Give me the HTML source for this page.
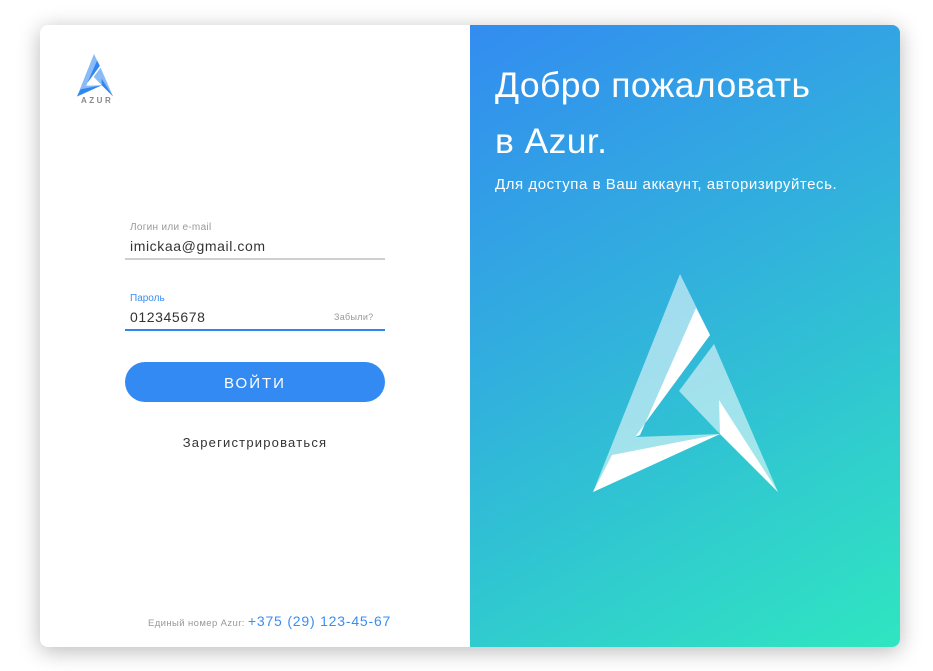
<!DOCTYPE html>
<html><head><meta charset="utf-8"><style>
*{margin:0;padding:0;box-sizing:border-box}
body{width:933px;height:671px;background:#fff;font-family:"Liberation Sans",sans-serif;position:relative;overflow:hidden}
.card{position:absolute;left:40px;top:25px;width:860px;height:622px;border-radius:8px;overflow:hidden;box-shadow:0 4px 22px rgba(0,0,0,0.28);background:#fff}
.right{position:absolute;left:430px;top:0;width:430px;height:622px;background:linear-gradient(150deg,#338cf0 0%,#31b2dc 45%,#2fe6c0 100%)}
.abs{position:absolute;white-space:nowrap}
</style></head><body>
<div class="card">
 <svg class="abs" style="left:0;top:0" width="120" height="80">
  <g transform="translate(37,29) scale(0.195) translate(-593,-274)">
   <polygon points="680,274 710,335 635,437 720,434 593,492" fill="#3a8ef0" fill-opacity="0.6"/>
   <polygon points="696,308 710,335 635,437 640,435" fill="#2f86ee"/>
   <polygon points="612,455 720,434 593,492" fill="#2f86ee"/>
   <polygon points="714,344 778,492 720,434 679,391" fill="#3a8ef0" fill-opacity="0.6"/>
   <polygon points="719,400 778,492 720,434" fill="#2f86ee"/>
  </g>
 </svg>
 <div class="abs" style="left:41px;top:71px;font-size:8px;font-weight:bold;letter-spacing:2.5px;color:#888">AZUR</div>

 <div class="abs" style="left:90px;top:197px;font-size:10px;color:#999;letter-spacing:0.3px">Логин или e-mail</div>
 <div class="abs" style="left:90px;top:213px;font-size:14px;color:#333;letter-spacing:0.6px">imickaa@gmail.com</div>
 <div class="abs" style="left:85px;top:233px;width:260px;height:2px;background:#cfcfcf"></div>

 <div class="abs" style="left:90px;top:268px;font-size:10px;color:#3a8ef0">Пароль</div>
 <div class="abs" style="left:90px;top:284px;font-size:14px;color:#333;letter-spacing:0.6px">012345678</div>
 <div class="abs" style="left:294px;top:287px;font-size:9px;color:#999;letter-spacing:0.3px">Забыли?</div>
 <div class="abs" style="left:85px;top:304px;width:260px;height:2px;background:#2f86ee"></div>

 <div class="abs" style="left:85px;top:337px;width:260px;height:40px;border-radius:20px;background:#338af2;color:#fff;font-size:15px;letter-spacing:2px;text-align:center;line-height:43px">ВОЙТИ</div>
 <div class="abs" style="left:85px;top:410px;width:260px;text-align:center;font-size:13px;color:#333;letter-spacing:1.2px">Зарегистрироваться</div>

 <div class="abs" style="left:108px;top:588px;font-size:9.5px;color:#999;letter-spacing:0.4px">Единый номер Azur: <span style="font-size:14px;color:#3a8ef0;letter-spacing:0.8px">+375 (29) 123-45-67</span></div>

 <div class="right">
  <div class="abs" style="left:25px;top:32px;font-size:35.5px;color:#fff;line-height:56px;letter-spacing:0.4px">Добро пожаловать<br>в Azur.</div>
  <div class="abs" style="left:25px;top:151px;font-size:15px;color:#fff;letter-spacing:0.55px">Для доступа в Ваш аккаунт, авторизируйтесь.</div>
  <svg class="abs" style="left:0;top:0" width="430" height="622">
   <g transform="translate(-470,-25)">
    <polygon points="680,274 710,335 635,437 720,434 593,492" fill="#fff" fill-opacity="0.55"/>
    <polygon points="696,308 710,335 635,437 640,435" fill="#fff"/>
    <polygon points="612,455 720,434 593,492" fill="#fff"/>
    <polygon points="714,344 778,492 720,434 679,391" fill="#fff" fill-opacity="0.55"/>
    <polygon points="719,400 778,492 720,434" fill="#fff"/>
   </g>
  </svg>
 </div>
</div>
</body></html>
